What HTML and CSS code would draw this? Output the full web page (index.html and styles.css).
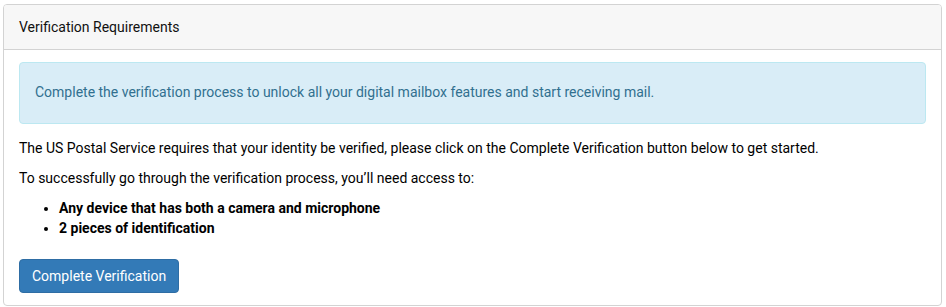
FILE: index.html
```html
<!DOCTYPE html>
<html>
<head>
<meta charset="utf-8">
<link rel="stylesheet" href="styles.css">
</head>
<body>
<div class="panel">
  <div class="panel-heading">Verification Requirements</div>
  <div class="panel-body">
    <div class="alert">Complete the verification process to unlock all your digital mailbox features and start receiving mail.</div>
    <p>The US Postal Service requires that your identity be verified, please click on the Complete Verification button below to get started.</p>
    <p>To successfully go through the verification process, you’ll need access to:</p>
    <ul class="reqs">
      <li>Any device that has both a camera and microphone</li>
      <li>2 pieces of identification</li>
    </ul>
    <button class="btn">Complete Verification</button>
  </div>
</div>
</body>
</html>
```
FILE: styles.css
```css
html, body { margin: 0; padding: 0; background: #fff; }
body {
  font-family: Roboto, "Liberation Sans", sans-serif;
  font-size: 14px;
  line-height: 20px;
  color: #000;
  padding: 4px 4px 0 3px;
}
.panel {
  border: 1px solid #d3d3d3;
  border-radius: 4px;
  background: #fff;
  height: 302px;
  box-sizing: border-box;
}
.panel-heading {
  background: #f7f7f7;
  border-bottom: 1px solid #d3d3d3;
  border-radius: 3px 3px 0 0;
  padding: 12px 15px;
  color: #111;
}
.panel-body { padding: 12px 15px; }
.alert {
  background: #d9edf7;
  border: 1px solid #bce8f1;
  color: #31708f;
  border-radius: 4px;
  padding: 19px 15px 21px;
  margin-bottom: 14px;
}
p { margin: 0 0 10px; }
.reqs { margin: 0 0 21px; padding-left: 40px; font-weight: bold; }
.btn {
  font-family: Roboto, "Liberation Sans", sans-serif;
  font-size: 14px;
  line-height: 20px;
  color: #fff;
  background: #337ab7;
  border: 1px solid #2e6da4;
  border-radius: 4px;
  padding: 6px 12px;
  white-space: nowrap;
  display: block;
}
```
